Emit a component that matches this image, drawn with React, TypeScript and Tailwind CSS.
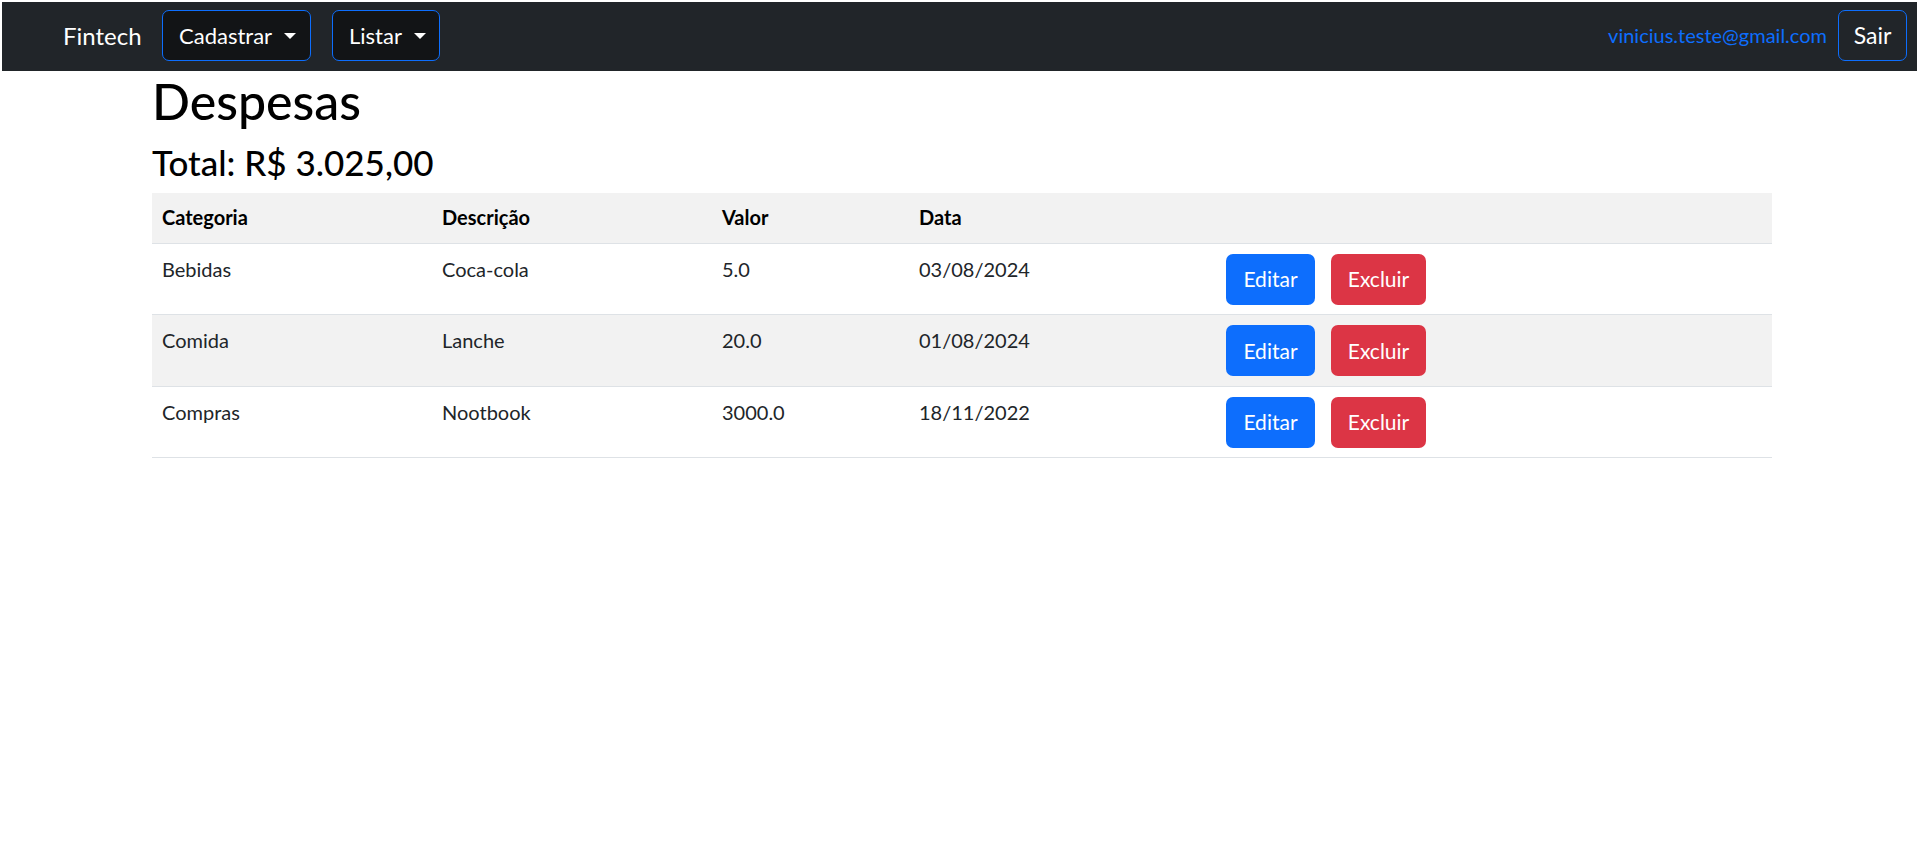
import React from "react";

type Despesa = {
  id: number;
  categoria: string;
  descricao: string;
  valor: string;
  data: string;
};

const despesas: Despesa[] = [
  { id: 1, categoria: "Bebidas", descricao: "Coca-cola", valor: "5.0", data: "03/08/2024" },
  { id: 2, categoria: "Comida", descricao: "Lanche", valor: "20.0", data: "01/08/2024" },
  { id: 3, categoria: "Compras", descricao: "Nootbook", valor: "3000.0", data: "18/11/2022" },
];

const Caret = () => (
  <span className="ml-[12px] inline-block h-0 w-0 border-x-[6px] border-t-[6px] border-x-transparent border-t-white" />
);

const Navbar = () => {
  return (
    <nav className="flex h-[69px] items-start justify-between bg-[#212529] pt-[8px]">
      <div className="flex items-center pl-[61px]">
        <span className="w-[99px] text-[24px] leading-[51px] text-white">Fintech</span>
        <button className="flex h-[51px] w-[149px] items-center rounded-[7px] border border-[#0d6efd] bg-[#121416] pl-[16px] text-[22px] text-white">
          Cadastrar
          <Caret />
        </button>
        <button className="ml-[21px] flex h-[51px] w-[108px] items-center rounded-[7px] border border-[#0d6efd] bg-[#121416] pl-[16px] text-[22px] text-white">
          Listar
          <Caret />
        </button>
      </div>
      <div className="flex items-center pr-[10px]">
        <span className="text-[20px] leading-[51px] text-[#0d6efd]">vinicius.teste@gmail.com</span>
        <button className="ml-[11px] flex h-[51px] w-[69px] items-center justify-center rounded-[7px] border border-[#0d6efd] text-[23px] text-white">
          Sair
        </button>
      </div>
    </nav>
  );
};

const App = () => {
  return (
    <div className="min-h-screen bg-white px-[2px] pt-[2px] font-['Lato',sans-serif] text-[#212529]">
      <Navbar />
      <main className="pl-[150px]">
        <div className="w-[1620px]">
          <h1 className="mb-[10px] h-[60px] text-[50px] leading-[60px] font-medium text-black">Despesas</h1>
          <h3 className="mb-[10px] h-[42px] text-[35px] leading-[42px] font-medium text-black">Total: R$ 3.025,00</h3>
          <table className="w-full table-fixed text-left text-[20px]">
            <colgroup>
              <col className="w-[280px]" />
              <col className="w-[280px]" />
              <col className="w-[197px]" />
              <col className="w-[307px]" />
              <col />
            </colgroup>
            <thead>
              <tr className="h-[50px] border-b border-[#dee2e6] bg-[#f2f2f2]">
                <th className="px-[10px] py-[9px] align-top leading-[30px] font-bold text-black">Categoria</th>
                <th className="px-[10px] py-[9px] align-top leading-[30px] font-bold text-black">Descrição</th>
                <th className="px-[10px] py-[9px] align-top leading-[30px] font-bold text-black">Valor</th>
                <th className="px-[10px] py-[9px] align-top leading-[30px] font-bold text-black">Data</th>
                <th className="px-[10px] py-[9px]"></th>
              </tr>
            </thead>
            <tbody>
              {despesas.map((d, i) => (
                <tr
                  key={d.id}
                  className={`h-[71.6px] border-b border-[#dee2e6] ${i % 2 === 1 ? "bg-[#f2f2f2]" : "bg-white"}`}
                >
                  <td className="px-[10px] pt-[10px] pb-[9.6px] align-top leading-[30px]">{d.categoria}</td>
                  <td className="px-[10px] pt-[10px] pb-[9.6px] align-top leading-[30px]">{d.descricao}</td>
                  <td className="px-[10px] pt-[10px] pb-[9.6px] align-top leading-[30px]">{d.valor}</td>
                  <td className="px-[10px] pt-[10px] pb-[9.6px] align-top leading-[30px]">{d.data}</td>
                  <td className="px-[10px] pt-[10px] pb-[9.6px] align-top">
                    <div className="flex gap-[16px]">
                      <button className="flex h-[51px] w-[89px] items-center justify-center rounded-[7px] bg-[#0d6efd] text-[21px] text-white">
                        Editar
                      </button>
                      <button className="flex h-[51px] w-[95px] items-center justify-center rounded-[7px] bg-[#dc3545] text-[21px] text-white">
                        Excluir
                      </button>
                    </div>
                  </td>
                </tr>
              ))}
            </tbody>
          </table>
        </div>
      </main>
    </div>
  );
};

export default App;
